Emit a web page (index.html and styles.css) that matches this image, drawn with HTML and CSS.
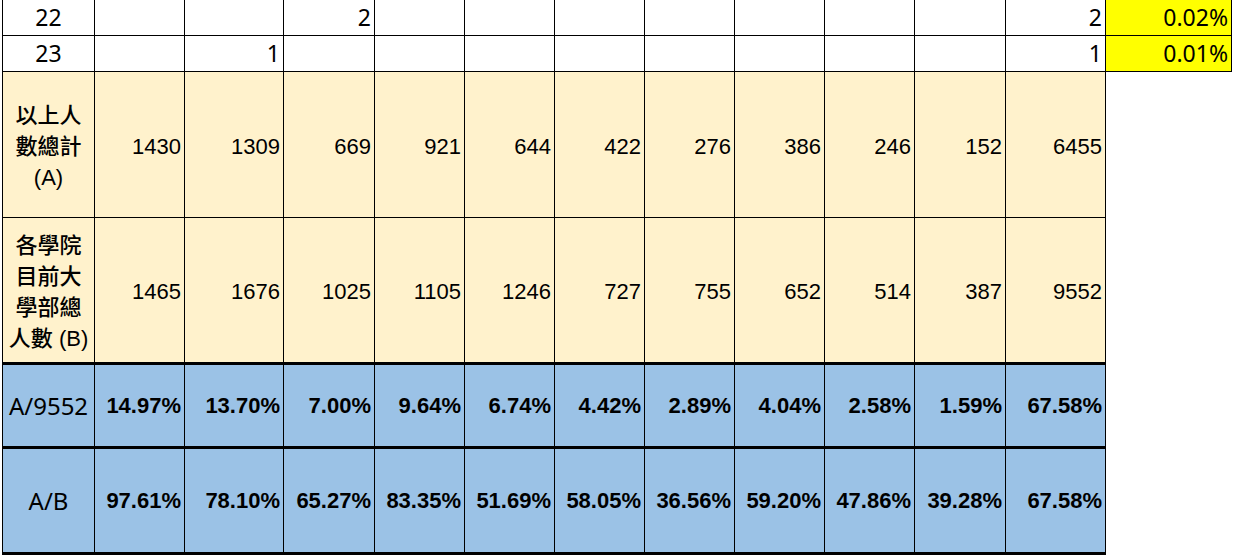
FILE: index.html
```html
<!DOCTYPE html>
<html lang="zh-Hant">
<head>
<meta charset="utf-8">
<title>統計表</title>
<link rel="stylesheet" href="styles.css">
</head>
<body>
<table class="sheet">
  <colgroup>
    <col class="c92"><col class="c90"><col class="c99"><col class="c91"><col class="c90"><col class="c90"><col class="c90"><col class="c90"><col class="c90"><col class="c90"><col class="c91"><col class="c100"><col class="c126">
  </colgroup>
  <tbody>
    <tr class="r-small">
      <td class="lab">22</td><td></td><td></td><td class="n">2</td><td></td><td></td><td></td><td></td><td></td><td></td><td></td><td class="n">2</td><td class="n hl">0.02%</td>
    </tr>
    <tr class="r-small">
      <td class="lab">23</td><td></td><td class="n">1</td><td></td><td></td><td></td><td></td><td></td><td></td><td></td><td></td><td class="n">1</td><td class="n hl">0.01%</td>
    </tr>
    <tr class="r-a tot">
      <td class="cjk">以上人<br>數總計<br>(A)</td>
      <td class="num">1430</td><td class="num">1309</td><td class="num">669</td><td class="num">921</td><td class="num">644</td><td class="num">422</td><td class="num">276</td><td class="num">386</td><td class="num">246</td><td class="num">152</td><td class="num">6455</td><td class="blank"></td>
    </tr>
    <tr class="r-b tot">
      <td class="cjk">各學院<br>目前大<br>學部總<br>人數 (B)</td>
      <td class="num">1465</td><td class="num">1676</td><td class="num">1025</td><td class="num">1105</td><td class="num">1246</td><td class="num">727</td><td class="num">755</td><td class="num">652</td><td class="num">514</td><td class="num">387</td><td class="num">9552</td><td class="blank"></td>
    </tr>
    <tr class="r-p1 pct">
      <td class="lab">A/9552</td>
      <td class="pc">14.97%</td><td class="pc">13.70%</td><td class="pc">7.00%</td><td class="pc">9.64%</td><td class="pc">6.74%</td><td class="pc">4.42%</td><td class="pc">2.89%</td><td class="pc">4.04%</td><td class="pc">2.58%</td><td class="pc">1.59%</td><td class="pc">67.58%</td><td class="blank"></td>
    </tr>
    <tr class="r-p2 pct">
      <td class="lab">A/B</td>
      <td class="pc">97.61%</td><td class="pc">78.10%</td><td class="pc">65.27%</td><td class="pc">83.35%</td><td class="pc">51.69%</td><td class="pc">58.05%</td><td class="pc">36.56%</td><td class="pc">59.20%</td><td class="pc">47.86%</td><td class="pc">39.28%</td><td class="pc">67.58%</td><td class="blank"></td>
    </tr>
  </tbody>
</table>
</body>
</html>
```
FILE: styles.css
```css
html, body {
  margin: 0;
  padding: 0;
  background: #ffffff;
}

.sheet {
  border-collapse: collapse;
  table-layout: fixed;
  width: 1229px;
  margin: -1px 0 0 2px;
  color: #000000;
}

.c92 { width: 92px; }
.c90 { width: 90px; }
.c99 { width: 99px; }
.c91 { width: 91px; }
.c100 { width: 100px; }
.c126 { width: 126px; }

.sheet td {
  border: 1px solid #000000;
  padding: 0 3px;
  font-family: "Noto Sans", "Noto Sans CJK TC", sans-serif;
  font-size: 23px;
  line-height: 1;
  white-space: nowrap;
  overflow: visible;
}

.r-small { height: 36px; }
.r-a { height: 146px; }
.r-b { height: 146px; }
.r-p1 { height: 84px; }
.r-p2 { height: 106px; }

.sheet .lab {
  text-align: center;
  padding: 0;
}

.n {
  text-align: right;
}

.hl {
  background: #ffff00;
}

.tot td {
  background: #fff2cc;
}

.pct td {
  background: #9bc2e6;
}

.sheet .tot td {
  padding-top: 4px;
}

.sheet .pct td {
  padding-top: 1px;
}

.sheet .cjk {
  text-align: center;
  font-family: "Liberation Sans", "Noto Sans CJK TC", sans-serif;
  font-size: 22px;
  font-weight: 500;
  line-height: 31px;
  padding: 4px 0 0 0;
}

.sheet .num {
  text-align: right;
  font-family: "Liberation Sans", Arial, sans-serif;
  font-size: 22px;
}

.sheet .pc {
  text-align: right;
  font-family: "Liberation Sans", Arial, sans-serif;
  font-size: 22px;
  font-weight: bold;
}

.sheet .pct td.lab {
  font-size: 24px;
}

.sheet .r-p1 td {
  border-top: 3px solid #000000;
  border-bottom: 3px solid #000000;
}

.sheet .r-p2 td {
  border-bottom: 3px solid #000000;
}

.sheet td.blank {
  background: transparent;
  border: none;
}
```
